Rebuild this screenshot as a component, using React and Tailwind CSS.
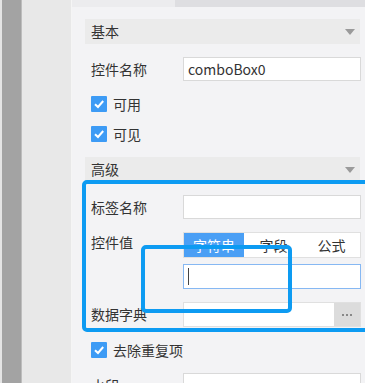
const font = { fontFamily: '"Noto Sans CJK SC", "Noto Sans", sans-serif' };

function Header({ title, className = "" }) {
	return (
		<div className={`flex items-center justify-between h-[25px] bg-[#ebebeb] pl-[6px] pr-[5px] text-[14px] text-[#333] ${className}`}>
			<span>{title}</span>
			<svg width="10" height="6" viewBox="0 0 10 6">
				<path d="M0 0 L10 0 L5 6 Z" fill="#9a9a9a" />
			</svg>
		</div>
	);
}

function Check({ label, className = "" }) {
	return (
		<div className={`flex items-center pl-[6px] h-[16px] text-[14px] text-[#333] ${className}`}>
			<span className="flex items-center justify-center w-[16px] h-[16px] bg-[#3d9bf5] rounded-[1px]">
				<svg width="12" height="12" viewBox="0 0 12 12">
					<path d="M2 6.2 L5 9 L10.2 3" stroke="white" strokeWidth="2" fill="none" />
				</svg>
			</span>
			<span className="ml-[6px]">{label}</span>
		</div>
	);
}

function Row({ label, children, className = "" }) {
	return (
		<div className={`flex items-center pl-[6px] text-[14px] text-[#333] ${className}`}>
			<span className="w-[92px] shrink-0">{label}</span>
			{children}
		</div>
	);
}

function Input({ value = "", className = "" }) {
	return (
		<div className={`flex items-center w-[178px] h-[24px] bg-white border border-[#d9d9d9] px-[4px] text-[14px] text-[#333] ${className}`}>
			{value}
		</div>
	);
}

export default function App() {
	return (
		<div className="flex w-[365px] h-[383px] overflow-hidden bg-[#f3f3f5]" style={font}>
			<div className="w-[2px] bg-[#e4e4e4]" />
			<div className="w-[20px] bg-[#a3a3a3] border-r border-[#bdbdbd]" />
			<div className="w-[50px] bg-[#e8e8e8] border-r border-[#f5f5f5]" />
			<div className="relative flex-1 flex flex-col">
				<div className="flex h-[7px] shrink-0">
					<div className="w-[103px] bg-[#ececee]" />
					<div className="flex-1 bg-[#dedee1]" />
				</div>
				<div className="pl-[13px] pr-[4px] shrink-0">
					<Header title="基本" className="mt-[12px] mr-[1px]" />
					<Row label="控件名称" className="mt-[13px]">
						<Input value="comboBox0" />
					</Row>
					<Check label="可用" className="mt-[15px]" />
					<Check label="可见" className="mt-[14px]" />
					<Header title="高级" className="mt-[15px] mr-[1px]" />
					<Row label="标签名称" className="mt-[13px]">
						<Input />
					</Row>
					<Row label="控件值" className="mt-[13px] items-start">
						<div className="flex flex-col">
							<div className="flex w-[178px] h-[26px] bg-white border border-[#e0e0e0] text-[14px]">
								<div className="w-[60px] flex items-center justify-center bg-[#4a9ff5] text-white">字符串</div>
								<div className="w-[59px] flex items-center justify-center text-[#333]">字段</div>
								<div className="flex-1 flex items-center justify-center text-[#333]">公式</div>
							</div>
							<div className="flex items-center w-[178px] h-[25px] mt-[6px] bg-white border border-[#86b8f3] px-[4px]">
								<div className="w-[1px] h-[17px] bg-[#444]" />
							</div>
						</div>
					</Row>
					<Row label="数据字典" className="mt-[13px]">
						<div className="flex w-[178px] h-[25px] bg-white border border-[#e0e0e0]">
							<div className="flex-1" />
							<div className="w-[26px] flex items-center justify-center gap-[2px] bg-[#dcdcdc]">
								<span className="w-[2px] h-[2px] bg-[#888]" />
								<span className="w-[2px] h-[2px] bg-[#888]" />
								<span className="w-[2px] h-[2px] bg-[#888]" />
							</div>
						</div>
					</Row>
					<Check label="去除重复项" className="mt-[15px]" />
					<Row label="水印" className="mt-[15px]">
						<Input />
					</Row>
				</div>
				<div className="absolute left-[10px] top-[180px] w-[300px] h-[152px] border-[4px] border-[#0d9bf2] rounded-[5px]" />
				<div className="absolute left-[69px] top-[245px] w-[151px] h-[68px] border-[4px] border-[#0d9bf2] rounded-[5px]" />
			</div>
		</div>
	);
}
